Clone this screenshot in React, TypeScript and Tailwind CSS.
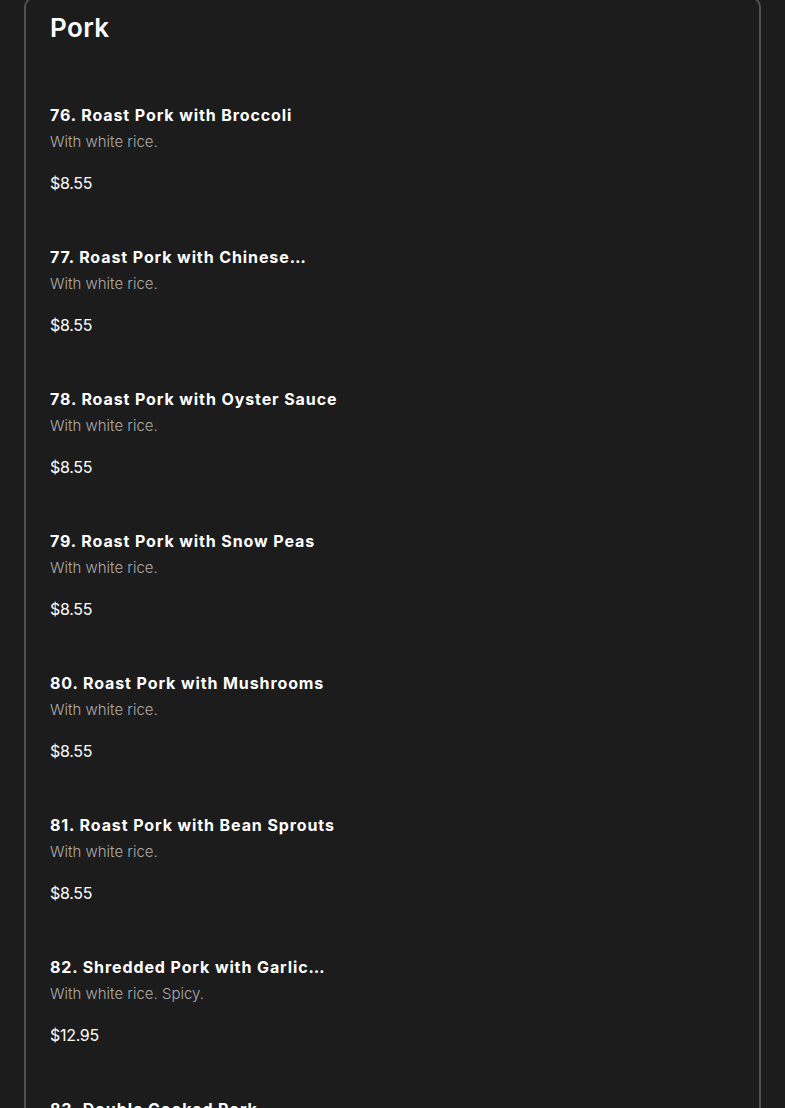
import React from 'react';

type Dish = { name: string; note: string; price: string };

const dishes: Dish[] = [
  { name: '76. Roast Pork with Broccoli', note: 'With white rice.', price: '$8.55' },
  { name: '77. Roast Pork with Chinese Vegetables', note: 'With white rice.', price: '$8.55' },
  { name: '78. Roast Pork with Oyster Sauce', note: 'With white rice.', price: '$8.55' },
  { name: '79. Roast Pork with Snow Peas', note: 'With white rice.', price: '$8.55' },
  { name: '80. Roast Pork with Mushrooms', note: 'With white rice.', price: '$8.55' },
  { name: '81. Roast Pork with Bean Sprouts', note: 'With white rice.', price: '$8.55' },
  { name: '82. Shredded Pork with Garlic Sauce', note: 'With white rice. Spicy.', price: '$12.95' },
  { name: '83. Double Cooked Pork', note: 'With white rice. Spicy.', price: '$12.95' },
];

export default function App() {
  return (
    <div className="min-h-screen bg-[#1c1c1c] font-['Inter','Liberation_Sans',sans-serif] text-white overflow-hidden">
      <div className="mx-6 -mt-[3px] rounded-[10px] border-2 border-[#505050] px-6 pt-[13px] pb-10">
        {/* Section heading */}
        <h2 className="text-[26px] leading-8 font-semibold tracking-[0.4px]">Pork</h2>

        <div className="mt-[59px] flex flex-col gap-[50px]">
          {dishes.map((d) => (
            <div key={d.name}>
              <h3 className="max-w-[300px] line-clamp-1 text-base leading-6 font-bold tracking-[0.9px]">{d.name}</h3>
              <p className="mt-[3px] text-[15px] leading-6 font-light text-[#ababab]">{d.note}</p>
              <p className="mt-[17px] text-base leading-6 tracking-[-0.3px]">{d.price}</p>
            </div>
          ))}
        </div>
      </div>
    </div>
  );
}
